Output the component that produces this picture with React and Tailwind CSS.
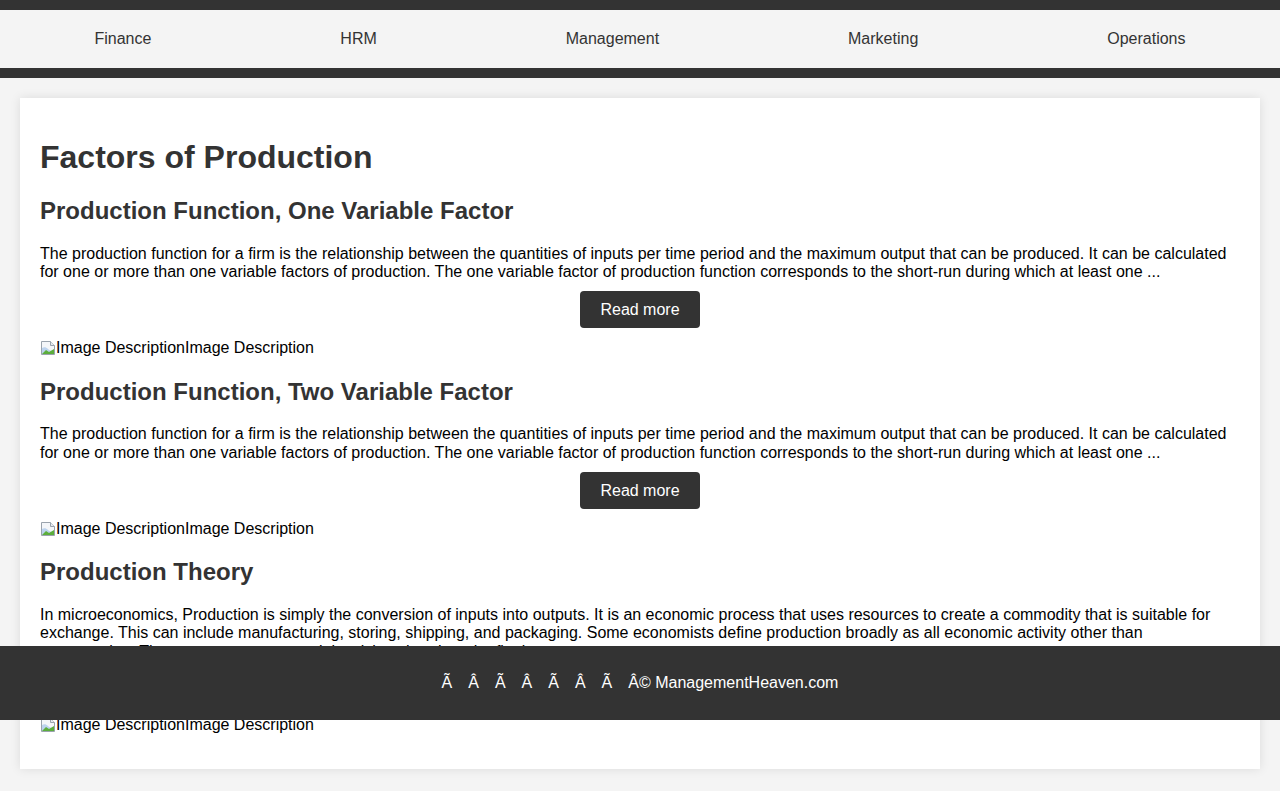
import React from 'react';

const BrokenImage = () => (
  <svg width="16" height="16" viewBox="0 0 16 16" className="inline-block align-[-3px]">
    <path d="M1.5 1.5h9l4 4v9h-13z" fill="#f4f6f9" stroke="#9aa3ad" />
    <path d="M2 8c2-1 4-1 6 1s4 2 6 1v4H2z" fill="#bcd3ee" />
    <path d="M2 14l4-4 3 2 5-3v5z" fill="#5cae3c" />
    <path d="M10.5 1.5v4h4" fill="#e6e9ee" stroke="#9aa3ad" />
  </svg>
);

const articles = [
  {
    title: 'Production Function, One Variable Factor',
    text: 'The production function for a firm is the relationship between the quantities of inputs per time period and the maximum output that can be produced. It can be calculated for one or more than one variable factors of production. The one variable factor of production function corresponds to the short-run during which at least one ...',
  },
  {
    title: 'Production Function, Two Variable Factor',
    text: 'The production function for a firm is the relationship between the quantities of inputs per time period and the maximum output that can be produced. It can be calculated for one or more than one variable factors of production. The one variable factor of production function corresponds to the short-run during which at least one ...',
  },
  {
    title: 'Production Theory',
    text: 'In microeconomics, Production is simply the conversion of inputs into outputs. It is an economic process that uses resources to create a commodity that is suitable for exchange. This can include manufacturing, storing, shipping, and packaging. Some economists define production broadly as all economic activity other than consumption. They see every commercial activity other than the final ...',
  },
];

const navItems = ['Finance', 'HRM', 'Management', 'Marketing', 'Operations'];

export default function App() {
  return (
    <div className="min-h-screen bg-[#f4f4f4] font-['Liberation_Sans',Arial,sans-serif] text-base text-black relative">
      {/* Header */}
      <header className="bg-[#333] py-[10px]">
        <nav className="bg-[#f4f4f4]">
          <ul className="flex justify-around items-center h-[58px] text-[#333]">
            {navItems.map((item) => (
              <li key={item}>
                <a href="#">{item}</a>
              </li>
            ))}
          </ul>
        </nav>
      </header>

      {/* Content */}
      <main className="p-5">
        <div className="bg-white p-5 shadow-[0_0_10px_rgba(0,0,0,0.1)]">
          <h1 className="text-[32px] font-bold text-[#333] leading-[37px] mt-[21px] mb-[21px]">
            Factors of Production
          </h1>
          {articles.map((a, i) => {
            const last = i === articles.length - 1;
            return (
              <article key={i} className={last ? 'mb-[14px]' : 'mb-[20px]'}>
                <h2 className="text-2xl font-bold text-[#333] leading-[28px] mb-[19.5px]">{a.title}</h2>
                <p className="leading-[18.4px]">{a.text}</p>
                <a
                  href="#"
                  className={
                    'block w-fit mx-auto bg-[#333] text-white px-5 py-[9.5px] leading-[18px] rounded-[4px] ' +
                    (last ? 'my-[8.5px]' : 'my-[10px]')
                  }
                >
                  Read more
                </a>
                <div className="leading-[18.4px] pt-[1px]">
                  <span>
                    <BrokenImage />
                    Image Description
                  </span>
                  <span>Image Description</span>
                </div>
              </article>
            );
          })}
        </div>
      </main>

      {/* Footer */}
      <footer className="absolute left-0 right-0 top-[646px] h-[74px] bg-[#333] text-white flex items-center justify-center">
        <p className="flex items-center">
          <span className="mr-4">Ã</span>
          <span className="mr-4">Â</span>
          <span className="mr-4">Ã</span>
          <span className="mr-4">Â</span>
          <span className="mr-4">Ã</span>
          <span className="mr-4">Â</span>
          <span className="mr-4">Ã</span>
          <span>Â© ManagementHeaven.com</span>
        </p>
      </footer>
    </div>
  );
}
